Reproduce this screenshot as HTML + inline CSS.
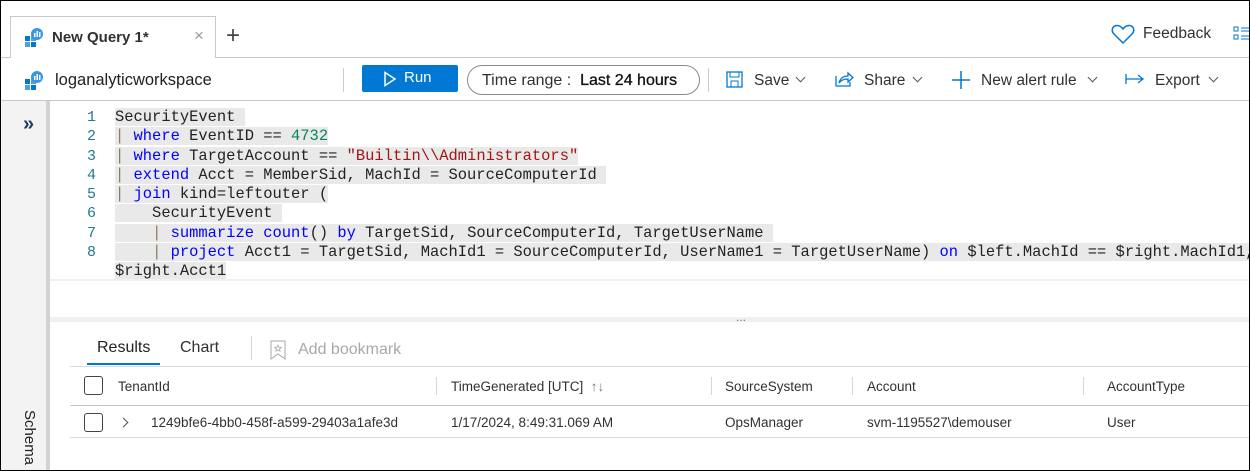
<!DOCTYPE html>
<html><head><meta charset="utf-8"><style>
*{box-sizing:border-box;margin:0;padding:0}
body{width:1250px;height:471px;overflow:hidden;background:#fff;font-family:"Liberation Sans",sans-serif;color:#323130;position:relative}
.frame{position:absolute;left:0;top:0;width:1250px;height:471px;border:1px solid #000;z-index:10;pointer-events:none}
.abs{position:absolute}
.tab{left:10px;top:16px;width:206px;height:42px;border:1px solid #c8c8c8;border-bottom:none;background:#fff}
.code{font-family:"Liberation Mono",monospace;font-size:15.45px;white-space:pre;line-height:19.3px}
.ln{color:#237893;text-align:right;width:36px;left:60px;font-size:15px}
.hl{background:#e9e9e9}
.k{color:#0000ff}.s{color:#a31515}.n{color:#098658}.p{color:#8a7a6a}
.tb{font-size:15.5px;color:#323130}
.th{font-size:13.5px;color:#323130;top:379px}
.td{font-size:13.5px;color:#323130;top:415px}
.cb{width:19px;height:19px;border:1.5px solid #444;border-radius:3px}
.sep{width:1px;background:#d6d6d6}
.chev{display:inline-block;width:7px;height:7px;border-right:1.3px solid #555;border-bottom:1.3px solid #555;transform:rotate(45deg)}
</style></head><body>
<div class="frame"></div>
<div class="abs" style="left:0;top:57px;width:1250px;height:1px;background:#c8c8c8"></div>
<div class="abs tab"></div>
<svg class="abs" style="left:24px;top:27px" width="20" height="20" viewBox="0 0 20 20"><rect x="1" y="9" width="5" height="5" fill="#0078d4"/><rect x="7" y="9" width="5" height="5" fill="#50a0e0"/><rect x="1" y="15" width="5" height="5" fill="#50a0e0"/><rect x="7" y="15" width="5" height="5" fill="#0078d4"/><circle cx="13" cy="7" r="6" fill="#3a96dd"/><rect x="10" y="6" width="1.5" height="4" fill="#fff"/><rect x="12.5" y="4" width="1.5" height="6" fill="#fff"/><rect x="15" y="5" width="1.5" height="5" fill="#fff"/></svg>
<div class="abs" style="left:52px;top:29px;font-size:15px;font-weight:bold;color:#323130">New Query 1*</div>
<div class="abs" style="left:194px;top:26px;font-size:17px;color:#999">×</div>
<div class="abs" style="left:226px;top:22px;font-size:24px;font-weight:300;color:#444">+</div>
<svg class="abs" style="left:1111px;top:23px" width="24" height="22" viewBox="0 0 24 22"><path d="M12 20 L3 11 C0 8 1 3 5.5 2.5 C8.5 2.2 10.5 4 12 6 C13.5 4 15.5 2.2 18.5 2.5 C23 3 24 8 21 11 Z" fill="none" stroke="#0078d4" stroke-width="1.5"/></svg>
<div class="abs tb" style="left:1143px;top:25px">Feedback</div>
<svg class="abs" style="left:1233px;top:26px" width="17" height="16"><rect x="1" y="1" width="4" height="4" fill="none" stroke="#0078d4"/><rect x="1" y="9" width="4" height="4" fill="none" stroke="#0078d4"/><path d="M8 2h9M8 5h9M8 10h9M8 13h9" stroke="#0078d4"/></svg>
<svg class="abs" style="left:24px;top:70px" width="20" height="20" viewBox="0 0 20 20"><rect x="1" y="9" width="5" height="5" fill="#0078d4"/><rect x="7" y="9" width="5" height="5" fill="#50a0e0"/><rect x="1" y="15" width="5" height="5" fill="#50a0e0"/><rect x="7" y="15" width="5" height="5" fill="#0078d4"/><circle cx="13" cy="7" r="6" fill="#3a96dd"/><rect x="10" y="6" width="1.5" height="4" fill="#fff"/><rect x="12.5" y="4" width="1.5" height="6" fill="#fff"/><rect x="15" y="5" width="1.5" height="5" fill="#fff"/></svg>
<div class="abs" style="left:55px;top:71px;font-size:16.5px;color:#222">loganalyticworkspace</div>
<div class="abs sep" style="left:343px;top:68px;height:24px;background:#ccc"></div>
<div class="abs" style="left:362px;top:65px;width:96px;height:27px;background:#0078d4;border-radius:2px"></div>
<svg class="abs" style="left:383px;top:71px" width="14" height="16"><path d="M2 1.5 L12 8 L2 14.5 Z" fill="none" stroke="#fff" stroke-width="1.5"/></svg>
<div class="abs" style="left:404px;top:69px;font-size:15px;color:#fff">Run</div>
<div class="abs" style="left:467px;top:65px;width:233px;height:30px;border:1px solid #8a8a8a;border-radius:15px"></div>
<div class="abs" style="left:482px;top:72px;font-size:16px;color:#323130">Time range :&nbsp; <span style="color:#111;font-weight:500;-webkit-text-stroke:0.3px #111">Last 24 hours</span></div>
<div class="abs sep" style="left:708px;top:68px;height:24px;background:#ccc"></div>
<svg class="abs" style="left:726px;top:71px" width="18" height="18"><rect x="1" y="1" width="15" height="15" fill="none" stroke="#0078d4" stroke-width="1.3"/><rect x="4" y="1" width="9" height="5" fill="none" stroke="#0078d4"/><rect x="5" y="10" width="7" height="6" fill="none" stroke="#0078d4"/></svg>
<div class="abs tb" style="left:754px;top:72px">Save</div>
<div class="abs chev" style="left:797px;top:74px"></div>
<svg class="abs" style="left:834px;top:70px" width="20" height="18"><path d="M2 6 V16 H16 V12" fill="none" stroke="#0078d4" stroke-width="1.3"/><path d="M5 13 C6 8 10 6 14 6 V3 L19 7.5 L14 12 V9 C10 9 7 10 5 13Z" fill="none" stroke="#0078d4" stroke-width="1.3"/></svg>
<div class="abs tb" style="left:864px;top:72px">Share</div>
<div class="abs chev" style="left:914px;top:74px"></div>
<svg class="abs" style="left:951px;top:70px" width="20" height="20"><path d="M10 1v18M1 10h18" stroke="#0078d4" stroke-width="1.5"/></svg>
<div class="abs tb" style="left:981px;top:72px">New alert rule</div>
<div class="abs chev" style="left:1089px;top:74px"></div>
<svg class="abs" style="left:1125px;top:72px" width="20" height="14"><path d="M1 2v10M1 7h17M13 3l5 4-5 4" fill="none" stroke="#0078d4" stroke-width="1.3"/></svg>
<div class="abs tb" style="left:1155px;top:72px">Export</div>
<div class="abs chev" style="left:1210px;top:74px"></div>
<div class="abs" style="left:0;top:100px;width:1250px;height:1px;background:#c8c8c8"></div>
<div class="abs" style="left:1px;top:101px;width:45px;height:370px;background:#f3f3f3"></div>
<div class="abs" style="left:46px;top:101px;width:4px;height:370px;background:#d2d2d2"></div>
<div class="abs" style="left:23px;top:113px;font-size:20px;color:#1d3d6b;font-weight:bold">»</div>
<div class="abs" style="top:410px;font-size:15px;color:#222;transform:rotate(90deg);transform-origin:0 0;left:38px">Schema</div>
<div class="abs code ln" style="top:108px">1
2
3
4
5
6
7
8</div>
<div class="abs code" style="left:115px;top:108px;color:#222"><span class="hl">SecurityEvent </span>
<span class="hl"><span class="p">|</span> <span class="k">where</span> EventID == <span class="n">4732</span></span>
<span class="hl"><span class="p">|</span> <span class="k">where</span> TargetAccount == <span class="s">"Builtin\\Administrators"</span></span>
<span class="hl"><span class="p">|</span> <span class="k">extend</span> Acct = MemberSid, MachId = SourceComputerId </span>
<span class="hl"><span class="p">|</span> <span class="k">join</span> kind=leftouter (</span>
<span class="hl">    SecurityEvent </span>
<span class="hl">    <span class="p">|</span> <span class="k">summarize</span> <span class="k">count</span>() <span class="k">by</span> TargetSid, SourceComputerId, TargetUserName </span>
<span class="hl">    <span class="p">|</span> <span class="k">project</span> Acct1 = TargetSid, MachId1 = SourceComputerId, UserName1 = TargetUserName) <span class="k">on</span> $left.MachId == $right.MachId1, </span>
<span class="hl">$right.Acct1</span></div>
<div class="abs" style="left:50px;top:279px;width:1200px;height:2px;background:#f0f0f0"></div>
<div class="abs" style="left:50px;top:317px;width:1200px;height:5px;background:#f0f0f0"></div>
<div class="abs" style="left:736px;top:310px;font-size:12px;color:#777">...</div>
<div class="abs" style="left:97px;top:339px;font-size:16px;color:#222">Results</div>
<div class="abs" style="left:87px;top:363px;width:73px;height:2px;background:#0078d4"></div>
<div class="abs" style="left:180px;top:339px;font-size:16px;color:#323130">Chart</div>
<div class="abs sep" style="left:251px;top:336px;height:24px"></div>
<svg class="abs" style="left:270px;top:340px" width="16" height="20"><path d="M1 1h14v18l-7-5-7 5z" fill="none" stroke="#aaa"/><path d="M8 5l1 2.2 2.3.2-1.8 1.5.6 2.3L8 10l-2.1 1.2.6-2.3L4.7 7.4 7 7.2z" fill="none" stroke="#aaa" stroke-width=".8"/></svg>
<div class="abs" style="left:298px;top:341px;font-size:16px;color:#a8a8a8">Add bookmark</div>
<div class="abs" style="left:70px;top:366px;width:1180px;height:1px;background:#dcdcdc"></div>
<div class="abs cb" style="left:84px;top:376px"></div>
<div class="abs th" style="left:118px">TenantId</div>
<div class="abs sep" style="left:436px;top:377px;height:18px"></div>
<div class="abs th" style="left:451px">TimeGenerated [UTC] <span style="color:#777">&nbsp;↑↓</span></div>
<div class="abs sep" style="left:711px;top:377px;height:18px"></div>
<div class="abs th" style="left:725px">SourceSystem</div>
<div class="abs sep" style="left:852px;top:377px;height:18px"></div>
<div class="abs th" style="left:867px">Account</div>
<div class="abs sep" style="left:1083px;top:377px;height:18px"></div>
<div class="abs th" style="left:1107px">AccountType</div>
<div class="abs" style="left:70px;top:405px;width:1180px;height:1px;background:#c8c8c8"></div>
<div class="abs cb" style="left:84px;top:413px"></div>
<div class="abs chev" style="left:120px;top:419px;transform:rotate(-45deg)"></div>
<div class="abs td" style="left:151px">1249bfe6-4bb0-458f-a599-29403a1afe3d</div>
<div class="abs td" style="left:451px">1/17/2024, 8:49:31.069 AM</div>
<div class="abs td" style="left:725px">OpsManager</div>
<div class="abs td" style="left:867px">svm-1195527\demouser</div>
<div class="abs td" style="left:1107px">User</div>
<div class="abs" style="left:70px;top:437px;width:1180px;height:1px;background:#dcdcdc"></div>
</body></html>
